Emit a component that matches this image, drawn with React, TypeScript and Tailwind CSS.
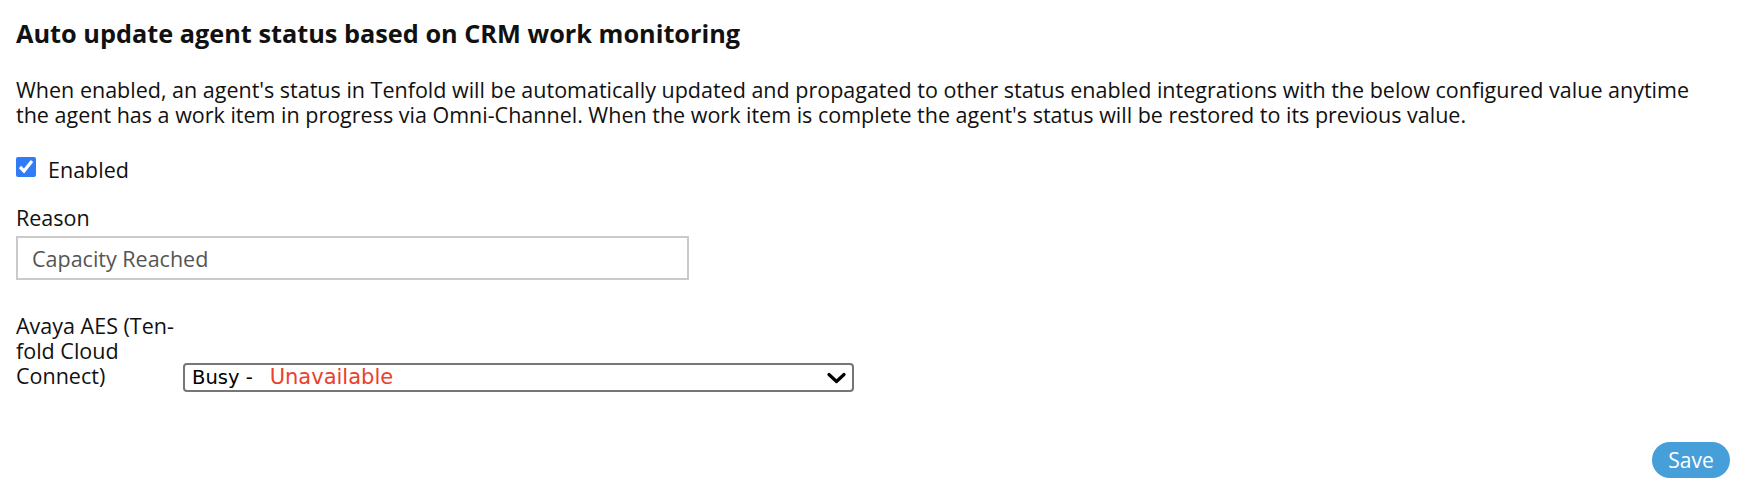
import { useState } from 'react'

export default function App() {
  const [enabled, setEnabled] = useState(true)
  const [reason, setReason] = useState('Capacity Reached')

  return (
    <div className="min-h-screen bg-white text-[#111] font-['Open_Sans',sans-serif] pl-4 pr-6 pt-[17px]">
      <h2 className="text-[25.3px] leading-[32px] font-bold">Auto update agent status based on CRM work monitoring</h2>

      <p className="mt-[28px] max-w-[1690px] text-[21.5px] leading-[25px]">
        When enabled, an agent's status in Tenfold will be automatically updated and propagated to other status enabled
        integrations with the below configured value anytime the agent has a work item in progress via Omni-Channel. When
        the work item is complete the agent's status will be restored to its previous value.
      </p>

      {/* Enabled */}
      <label className="mt-[30px] flex items-start gap-3 text-[21.5px] leading-[25px] w-fit">
        <input
          type="checkbox"
          checked={enabled}
          onChange={(e) => setEnabled(e.target.checked)}
          className="m-0 w-[20px] h-[20px] accent-[#2f7cf6]"
        />
        <span>Enabled</span>
      </label>

      {/* Reason */}
      <div className="mt-[23px]">
        <p className="text-[21.5px] leading-[25px]">Reason</p>
        <input
          value={reason}
          onChange={(e) => setReason(e.target.value)}
          className="mt-[6px] block w-[673px] h-[44px] border-2 border-[#cacaca] px-[14px] text-[21.5px] text-[#555] outline-none"
        />
      </div>

      {/* Integration status */}
      <div className="mt-[33px] flex items-end">
        <p className="w-[167px] shrink-0 text-[21.5px] leading-[25px] pb-[4px]">Avaya AES (Ten&shy;fold Cloud Connect)</p>
        <button className="w-[671px] h-[29px] flex items-center border-2 border-[#767676] rounded-[4px] pl-[7px] pr-[6px] font-['DejaVu_Sans',sans-serif] leading-none">
          <span className="text-[19.5px] text-black">Busy -</span>
          <span className="ml-[17px] text-[21px] text-[#e8412c]">Unavailable</span>
          <svg className="ml-auto" width="19" height="12" viewBox="0 0 19 12" fill="none">
            <path d="M2 2.5l7.5 7 7.5-7" stroke="#000" strokeWidth="3.2" strokeLinecap="round" strokeLinejoin="round" />
          </svg>
        </button>
      </div>

      <div className="mt-[50px] flex justify-end">
        <button className="w-[78px] h-[36px] rounded-full bg-[#469fd9] text-white text-[21px] leading-none">Save</button>
      </div>
    </div>
  )
}
